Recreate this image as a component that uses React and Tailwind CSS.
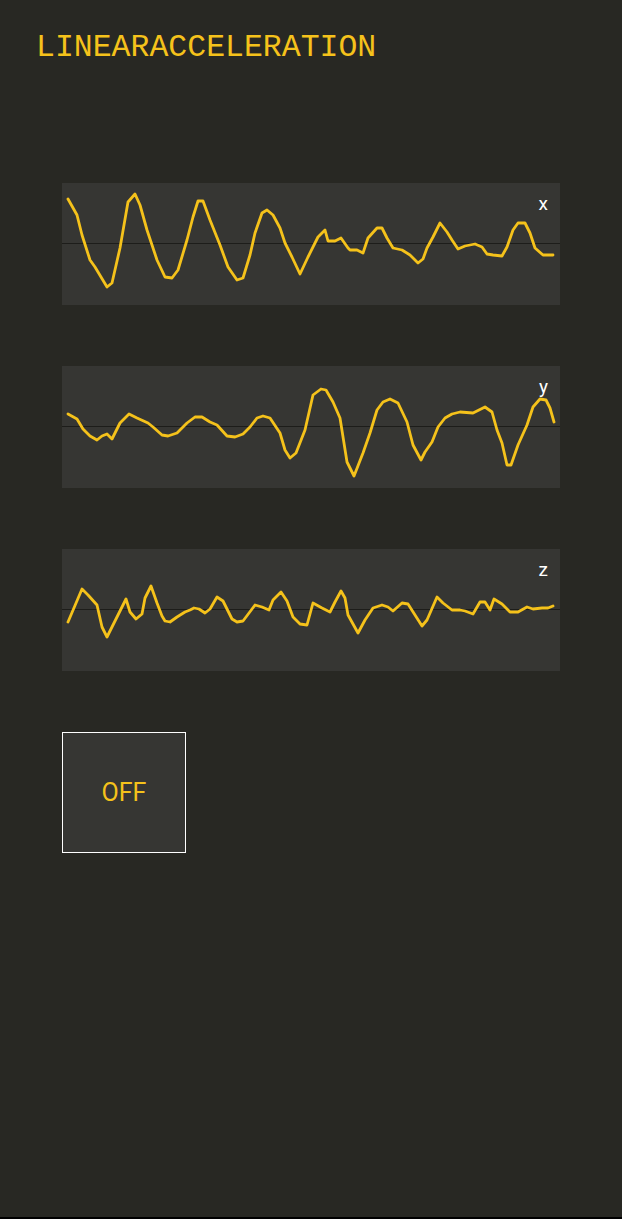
import React from "react";

// sample points traced in page coordinates; shifted into each panel below
const X_POINTS = [
  [68, 199], [77, 215], [82, 235], [90, 260], [95, 267], [107, 287], [112, 283],
  [120, 248], [128, 202], [135, 194], [140, 205], [147, 230], [157, 260], [165, 277],
  [172, 278], [178, 270], [187, 240], [193, 217], [198, 201], [203, 201], [210, 220],
  [220, 245], [228, 267], [237, 280], [243, 278], [250, 255], [255, 233], [262, 213],
  [267, 210], [273, 215], [280, 228], [285, 243], [292, 257], [300, 274], [308, 257],
  [318, 237], [325, 230], [328, 241], [335, 241], [341, 238], [348, 248], [350, 250],
  [357, 250], [363, 253], [368, 238], [377, 228], [382, 228], [387, 238], [393, 248],
  [402, 250], [410, 255], [418, 263], [423, 259], [427, 248], [433, 237], [440, 223],
  [447, 232], [452, 240], [458, 249], [465, 246], [475, 244], [482, 247], [487, 254],
  [493, 255], [502, 256], [507, 247], [513, 230], [518, 223], [525, 223], [530, 233],
  [535, 248], [543, 255], [553, 255],
];

const Y_POINTS = [
  [68, 414], [77, 419], [83, 429], [90, 436], [97, 440], [102, 436], [107, 434],
  [112, 439], [120, 423], [129, 414], [137, 418], [148, 423], [153, 427], [162, 435],
  [168, 436], [177, 433], [187, 423], [195, 417], [202, 417], [210, 422], [217, 425],
  [227, 436], [235, 437], [243, 434], [250, 427], [257, 418], [263, 416], [270, 418],
  [280, 433], [285, 450], [290, 458], [296, 453], [305, 430], [313, 395], [321, 389],
  [326, 390], [333, 402], [340, 418], [347, 462], [354, 476], [363, 453], [370, 433],
  [377, 410], [383, 402], [390, 399], [398, 403], [407, 422], [413, 445], [421, 460],
  [425, 452], [432, 442], [438, 427], [445, 418], [452, 414], [460, 412], [473, 413],
  [485, 407], [492, 412], [497, 430], [502, 443], [507, 465], [511, 465], [518, 445],
  [527, 425], [533, 407], [540, 399], [546, 400], [550, 408], [554, 422],
];

const Z_POINTS = [
  [68, 622], [82, 589], [88, 595], [97, 605], [102, 627], [107, 637], [117, 617],
  [126, 599], [130, 612], [136, 619], [142, 614], [145, 598], [151, 586], [157, 603],
  [162, 616], [165, 621], [170, 622], [177, 617], [185, 612], [190, 610], [194, 608],
  [199, 609], [205, 613], [210, 609], [217, 597], [223, 601], [232, 619], [237, 622],
  [243, 621], [255, 605], [262, 607], [269, 610], [273, 600], [281, 592], [287, 601],
  [293, 617], [300, 624], [307, 625], [313, 603], [322, 608], [330, 612], [335, 602],
  [341, 591], [345, 598], [348, 615], [358, 633], [365, 620], [373, 608], [382, 605],
  [388, 607], [393, 611], [402, 603], [408, 604], [415, 615], [422, 626], [427, 620],
  [437, 597], [443, 603], [452, 610], [460, 610], [465, 611], [473, 614], [480, 602],
  [485, 602], [490, 610], [494, 599], [502, 604], [510, 612], [518, 612], [527, 607],
  [533, 609], [542, 608], [548, 608], [553, 606],
];

const CHARTS = [
  { label: "x", top: 183, points: X_POINTS },
  { label: "y", top: 366, points: Y_POINTS },
  { label: "z", top: 549, points: Z_POINTS },
];

const Chart = ({ label, top, points }) => {
  const line = points.map(([x, y]) => `${x - 62},${y - top}`).join(" ");
  return (
    <div className="relative w-[498px] h-[122px] bg-[#363633]">
      <svg className="absolute inset-0" width="498" height="122" viewBox="0 0 498 122">
        <line x1="0" y1="60.5" x2="498" y2="60.5" stroke="#1d1d1a" strokeWidth="1" />
        <polyline
          points={line}
          fill="none"
          stroke="#f5c21b"
          strokeWidth="2.8"
          strokeLinejoin="round"
          strokeLinecap="round"
        />
      </svg>
      <span className="absolute right-[12px] top-[11px] text-[19px] leading-none text-white font-['Roboto',sans-serif]">
        {label}
      </span>
    </div>
  );
};

const App = () => {
  return (
    <div className="w-[622px] h-[1219px] flex flex-col bg-[#282823]">
      <div className="flex-1 px-[36px] pt-[32px]">
        <h1 className="text-[31.5px] leading-[32px] text-[#f5c21b] font-['Courier_New','Liberation_Mono',monospace]">
          LINEARACCELERATION
        </h1>

        <div className="ml-[26px] mt-[119px] flex flex-col gap-[61px]">
          {CHARTS.map((c) => (
            <Chart key={c.label} {...c} />
          ))}

          <button className="w-[124px] h-[121px] flex items-center justify-center bg-[#363633] border-[1.5px] border-white text-[25px] text-[#f5c21b] font-['Roboto',sans-serif]">
            OFF
          </button>
        </div>
      </div>
      <div className="h-[2px] bg-black" />
    </div>
  );
};

export default App;
